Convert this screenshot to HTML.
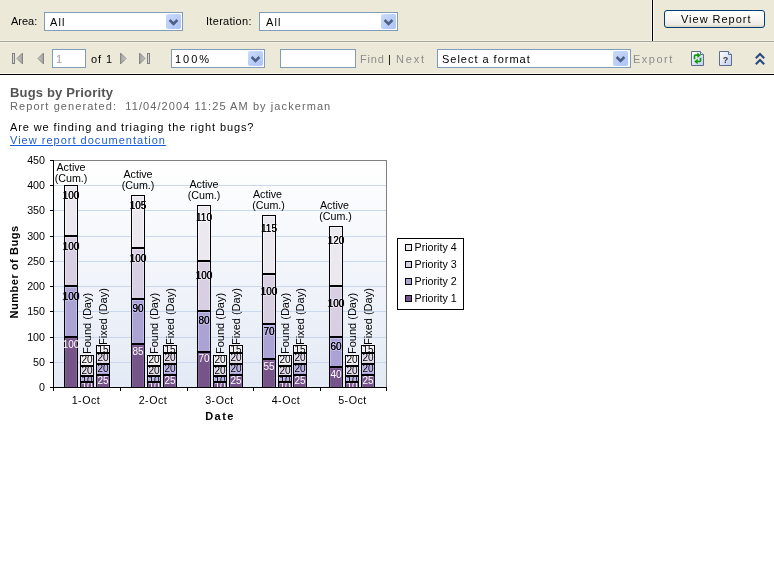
<!DOCTYPE html>
<html><head><meta charset="utf-8">
<style>
html,body{margin:0;padding:0;width:774px;height:587px;overflow:hidden;background:#fff;font-family:"Liberation Sans",sans-serif;}
.a{position:absolute;white-space:nowrap;}
.t11{font-size:11px;line-height:12px;}
#params{position:absolute;left:0;top:0;width:774px;height:41px;background:#ECE9D8;}
#sep1{position:absolute;left:0;top:40px;width:774px;height:1px;background:#F3F1E6;}
#sep2{position:absolute;left:0;top:41px;width:774px;height:1px;background:#A9A79A;}
#tb{position:absolute;left:0;top:42px;width:774px;height:32px;background:#ECE9D8;}
#tbl{position:absolute;left:0;top:42px;width:774px;height:1px;background:#F3F1E6;}
#tbb1{position:absolute;left:0;top:73px;width:774px;height:1px;background:#FAF8EC;}
#tbb2{position:absolute;left:0;top:74px;width:774px;height:1px;background:#000;}
.dd{position:absolute;box-sizing:border-box;border:1px solid #7F9DB9;background:#fff;}
.btn{position:absolute;width:15px;height:15px;border-radius:2px;background:linear-gradient(135deg,#CBDAFC 0%,#B7CCF7 60%,#ADC3F5 100%);}
.btn svg{position:absolute;left:0;top:0;}
svg text{font-family:"Liberation Sans",sans-serif;}
.a,svg{will-change:transform;}
.ax{font-size:10.7px;fill:#000;}
.lb{font-size:10.7px;fill:#000;}
.lbs{font-size:10px;fill:#000;}
.rl{font-size:11px;fill:#000;}
.hl{stroke-width:2px;paint-order:stroke;stroke-linejoin:round;}
.tt{font-size:11px;font-weight:bold;fill:#000;}
.lg{font-size:10.7px;fill:#000;}
</style></head><body>
<div id="params"></div>
<div id="sep1"></div><div id="sep2"></div>
<div id="tb"></div><div id="tbl"></div><div id="tbb1"></div><div id="tbb2"></div>
<div class="a" style="left:651px;top:0;width:1px;height:41px;background:#FAF8EC"></div>
<div class="a" style="left:652px;top:0;width:1px;height:41px;background:#000"></div>
<div class="a" style="left:653px;top:0;width:1px;height:41px;background:#FAF8EC"></div>

<div class="a t11 m" style="left:11px;top:15px;">Area:</div>
<div class="dd" style="left:44px;top:12px;width:139px;height:19px;"></div>
<div class="a t11 m" style="left:50px;top:16px;letter-spacing:1.1px;">All</div>
<div class="btn" style="left:166px;top:14px;"><svg width="15" height="15"><path d="M3.6 6 L7.5 9.9 L11.4 6" stroke="#4D6185" stroke-width="2.6" fill="none"/></svg></div>

<div class="a t11 m" style="letter-spacing:0.3px;left:206px;top:15px;">Iteration:</div>
<div class="dd" style="left:259px;top:12px;width:139px;height:19px;"></div>
<div class="a t11 m" style="left:266px;top:16px;letter-spacing:1.1px;">All</div>
<div class="btn" style="left:381px;top:14px;"><svg width="15" height="15"><path d="M3.6 6 L7.5 9.9 L11.4 6" stroke="#4D6185" stroke-width="2.6" fill="none"/></svg></div>

<div class="a" style="left:664px;top:10px;width:101px;height:18px;box-sizing:border-box;border:1px solid #003C74;border-radius:3px;background:linear-gradient(#FFFFFF 0%,#F7F6F2 50%,#ECEAE3 85%,#D8D2C2 100%);"></div>
<div class="a t11 m" style="letter-spacing:0.98px;left:681px;top:13px;">View Report</div>

<div class="dd" style="left:52px;top:49px;width:34px;height:19px;"></div>
<div class="a t11 m" style="left:56px;top:53px;color:#A0A0A0;">1</div>
<div class="a t11 m" style="letter-spacing:0.9px;left:91px;top:53px;">of 1</div>

<div class="dd" style="left:171px;top:49px;width:94px;height:19px;"></div>
<div class="a t11 m" style="letter-spacing:2.0px;left:175px;top:53px;">100%</div>
<div class="btn" style="left:248px;top:51px;"><svg width="15" height="15"><path d="M3.6 6 L7.5 9.9 L11.4 6" stroke="#4D6185" stroke-width="2.6" fill="none"/></svg></div>

<div class="dd" style="left:280px;top:49px;width:76px;height:19px;"></div>
<div class="a t11 m" style="letter-spacing:0.85px;left:359.5px;top:53px;color:#8C8C8C;">Find</div>
<div class="a t11 m" style="left:388px;top:53px;">|</div>
<div class="a t11 m" style="letter-spacing:1.85px;left:395.5px;top:53px;color:#8C8C8C;">Next</div>

<div class="dd" style="left:437px;top:49px;width:194px;height:19px;"></div>
<div class="a t11 m" style="letter-spacing:0.98px;left:442px;top:53px;">Select a format</div>
<div class="btn" style="left:613px;top:51px;"><svg width="15" height="15"><path d="M3.6 6 L7.5 9.9 L11.4 6" stroke="#4D6185" stroke-width="2.6" fill="none"/></svg></div>
<div class="a t11 m" style="letter-spacing:1.5px;left:633px;top:53px;color:#8C8C8C;">Export</div>

<div class="a t11 m" style="letter-spacing:0.17px;left:9.5px;top:86px;font-size:13px;line-height:14px;font-weight:bold;color:#555;">Bugs by Priority</div>
<div class="a t11 m" style="letter-spacing:1.08px;left:10px;top:100px;color:#666;">Report generated:&nbsp; 11/04/2004 11:25 AM by jackerman</div>
<div class="a t11 m" style="letter-spacing:0.89px;left:10px;top:121px;">Are we finding and triaging the right bugs?</div>
<div class="a t11 m" style="letter-spacing:1.01px;left:10px;top:134px;color:#1F5BD1;text-decoration:underline;">View report documentation</div>


<svg class="a" style="left:0;top:42px" width="774" height="32">
<defs>
<linearGradient id="gb" x1="0" y1="0" x2="1" y2="0"><stop offset="0" stop-color="#9A9A9A"/><stop offset="0.5" stop-color="#D8D8D8"/><stop offset="1" stop-color="#8A8A8A"/></linearGradient>
<linearGradient id="gt" x1="0" y1="0" x2="1" y2="0"><stop offset="0" stop-color="#D0D0D0"/><stop offset="1" stop-color="#9C9C9C"/></linearGradient>
<linearGradient id="gtr" x1="1" y1="0" x2="0" y2="0"><stop offset="0" stop-color="#D0D0D0"/><stop offset="1" stop-color="#9C9C9C"/></linearGradient>
<linearGradient id="doc" x1="0" y1="0" x2="1" y2="1"><stop offset="0" stop-color="#FFFFFF"/><stop offset="1" stop-color="#BFCDEE"/></linearGradient>
</defs>
<rect x="12.5" y="11.5" width="2" height="10" fill="url(#gb)" stroke="#7E7E7E" stroke-width="1"/>
<path d="M17 16.5 L22.5 11 L22.5 22 Z" fill="url(#gt)" stroke="#808080" stroke-width="0.9" stroke-linejoin="round"/>
<path d="M38 16.5 L43.5 11 L43.5 22 Z" fill="url(#gt)" stroke="#808080" stroke-width="0.9" stroke-linejoin="round"/>
<path d="M126 16.5 L120.5 11 L120.5 22 Z" fill="url(#gtr)" stroke="#808080" stroke-width="0.9" stroke-linejoin="round"/>
<path d="M145 16.5 L139.5 11 L139.5 22 Z" fill="url(#gtr)" stroke="#808080" stroke-width="0.9" stroke-linejoin="round"/>
<rect x="147.5" y="11.5" width="2" height="10" fill="url(#gb)" stroke="#7E7E7E" stroke-width="1"/>
<path d="M691.5 9.5 L700.5 9.5 L703.5 12.5 L703.5 23.5 L691.5 23.5 Z" fill="url(#doc)" stroke="#5C6F8E" stroke-width="1"/>
<path d="M700.5 9.5 L700.5 12.5 L703.5 12.5" fill="#E8EEF8" stroke="#5C6F8E" stroke-width="1"/>
<path d="M694.5 17.2 L694.5 14 Q694.5 13.2 695.5 13.2 L698 13.2" fill="none" stroke="#129A12" stroke-width="1.7"/>
<path d="M697.3 10.6 L700.9 13.3 L697.3 16 Z" fill="#129A12"/>
<path d="M700.5 15.8 L700.5 18.6 Q700.5 19.5 699.5 19.5 L697 19.5" fill="none" stroke="#129A12" stroke-width="1.7"/>
<path d="M697.7 16.8 L694.1 19.5 L697.7 22.2 Z" fill="#129A12"/>
<path d="M719.5 9.5 L728.5 9.5 L731.5 12.5 L731.5 23.5 L719.5 23.5 Z" fill="url(#doc)" stroke="#5C6F8E" stroke-width="1"/>
<path d="M728.5 9.5 L728.5 12.5 L731.5 12.5" fill="#E8EEF8" stroke="#5C6F8E" stroke-width="1"/>
<text x="725.5" y="21" text-anchor="middle" style="font-family:'Liberation Sans';font-size:9px;font-weight:bold;fill:#333">?</text>
<path d="M755.8 16.2 L760 12 L764.2 16.2" fill="none" stroke="#2A4A7E" stroke-width="2.1"/>
<path d="M755.8 22.2 L760 18 L764.2 22.2" fill="none" stroke="#2A4A7E" stroke-width="2.1"/>
</svg>
<svg class="a" style="left:0;top:0" width="774" height="587" shape-rendering="crispEdges">
<defs><linearGradient id="bg" x1="0" y1="0" x2="0" y2="1"><stop offset="0" stop-color="#FFFFFF"/><stop offset="1" stop-color="#E4EAF5"/></linearGradient><clipPath id="pc"><rect x="0" y="0" width="774" height="387"/></clipPath></defs>
<rect x="54" y="161" width="332" height="226" fill="url(#bg)" />
<rect x="54" y="362" width="332" height="1" fill="#C9D8EC" />
<rect x="54" y="337" width="332" height="1" fill="#C9D8EC" />
<rect x="54" y="311" width="332" height="1" fill="#C9D8EC" />
<rect x="54" y="286" width="332" height="1" fill="#C9D8EC" />
<rect x="54" y="261" width="332" height="1" fill="#C9D8EC" />
<rect x="54" y="236" width="332" height="1" fill="#C9D8EC" />
<rect x="54" y="210" width="332" height="1" fill="#C9D8EC" />
<rect x="54" y="185" width="332" height="1" fill="#C9D8EC" />
<rect x="53" y="160" width="334" height="1" fill="#808080" />
<rect x="386" y="160" width="1" height="227" fill="#808080" />
<rect x="53" y="160" width="1" height="228" fill="#000" />
<rect x="53" y="387" width="334" height="1" fill="#000" />
<rect x="50" y="387" width="3" height="1" fill="#000" />
<text x="45" y="391" text-anchor="end" class="ax">0</text>
<rect x="50" y="362" width="3" height="1" fill="#000" />
<text x="45" y="366" text-anchor="end" class="ax">50</text>
<rect x="50" y="337" width="3" height="1" fill="#000" />
<text x="45" y="341" text-anchor="end" class="ax">100</text>
<rect x="50" y="311" width="3" height="1" fill="#000" />
<text x="45" y="315" text-anchor="end" class="ax">150</text>
<rect x="50" y="286" width="3" height="1" fill="#000" />
<text x="45" y="290" text-anchor="end" class="ax">200</text>
<rect x="50" y="261" width="3" height="1" fill="#000" />
<text x="45" y="265" text-anchor="end" class="ax">250</text>
<rect x="50" y="236" width="3" height="1" fill="#000" />
<text x="45" y="240" text-anchor="end" class="ax">300</text>
<rect x="50" y="210" width="3" height="1" fill="#000" />
<text x="45" y="214" text-anchor="end" class="ax">350</text>
<rect x="50" y="185" width="3" height="1" fill="#000" />
<text x="45" y="189" text-anchor="end" class="ax">400</text>
<rect x="50" y="160" width="3" height="1" fill="#000" />
<text x="45" y="164" text-anchor="end" class="ax">450</text>
<rect x="53" y="387" width="1" height="4" fill="#000" />
<rect x="120" y="387" width="1" height="4" fill="#000" />
<rect x="187" y="387" width="1" height="4" fill="#000" />
<rect x="253" y="387" width="1" height="4" fill="#000" />
<rect x="320" y="387" width="1" height="4" fill="#000" />
<rect x="386" y="387" width="1" height="4" fill="#000" />
<rect x="65" y="186" width="12" height="49" fill="#F6F4F8" />
<rect x="66" y="187" width="10" height="48" fill="#ECE8F0" />
<text x="71" y="199" text-anchor="middle" style="fill:#000;stroke:#F6F4F8" class="lbs hl">100</text>
<rect x="65" y="237" width="12" height="48" fill="#E6E0EE" />
<rect x="66" y="238" width="10" height="47" fill="#D8CFE3" />
<text x="71" y="250" text-anchor="middle" style="fill:#000;stroke:#E6E0EE" class="lbs hl">100</text>
<rect x="65" y="287" width="12" height="49" fill="#C2BCEA" />
<rect x="66" y="288" width="10" height="48" fill="#ABA3D3" />
<text x="71" y="300" text-anchor="middle" style="fill:#000;stroke:#C2BCEA" class="lbs hl">100</text>
<rect x="65" y="338" width="12" height="49" fill="#84649A" />
<rect x="66" y="339" width="10" height="48" fill="#76548A" />
<rect x="64" y="185" width="14" height="1" fill="#000" />
<rect x="64" y="235" width="14" height="1" fill="#000" />
<rect x="64" y="236" width="14" height="1" fill="#000" />
<rect x="64" y="285" width="14" height="1" fill="#000" />
<rect x="64" y="286" width="14" height="1" fill="#000" />
<rect x="64" y="336" width="14" height="1" fill="#000" />
<rect x="64" y="337" width="14" height="1" fill="#000" />
<rect x="64" y="185" width="1" height="202" fill="#000" />
<rect x="77" y="185" width="1" height="202" fill="#000" />
<text x="71" y="199" text-anchor="middle" style="fill:#000" class="lbs">100</text>
<text x="71" y="250" text-anchor="middle" style="fill:#000" class="lbs">100</text>
<text x="71" y="300" text-anchor="middle" style="fill:#000" class="lbs">100</text>
<text x="71" y="348" text-anchor="middle" style="fill:#fff" class="lbs">100</text>
<g clip-path="url(#pc)">
<rect x="81" y="356" width="12" height="9" fill="#F6F4F8" />
<rect x="82" y="357" width="10" height="8" fill="#ECE8F0" />
<text x="87" y="363" text-anchor="middle" style="fill:#000;stroke:#F6F4F8" class="lbs hl">20</text>
<rect x="81" y="367" width="12" height="8" fill="#E6E0EE" />
<rect x="82" y="368" width="10" height="7" fill="#D8CFE3" />
<text x="87" y="374" text-anchor="middle" style="fill:#000;stroke:#E6E0EE" class="lbs hl">20</text>
<rect x="81" y="377" width="12" height="4" fill="#C2BCEA" />
<rect x="82" y="378" width="10" height="3" fill="#ABA3D3" />
<text x="87" y="384" text-anchor="middle" style="fill:#000;stroke:#C2BCEA" class="lbs hl">10</text>
<rect x="81" y="383" width="12" height="4" fill="#84649A" />
<rect x="82" y="384" width="10" height="3" fill="#76548A" />
<text x="87" y="390" text-anchor="middle" style="fill:#fff;stroke:none" class="lbs">10</text>
<rect x="80" y="355" width="14" height="1" fill="#000" />
<rect x="80" y="365" width="14" height="1" fill="#000" />
<rect x="80" y="366" width="14" height="1" fill="#000" />
<rect x="80" y="375" width="14" height="1" fill="#000" />
<rect x="80" y="376" width="14" height="1" fill="#000" />
<rect x="80" y="381" width="14" height="1" fill="#000" />
<rect x="80" y="382" width="14" height="1" fill="#000" />
<rect x="80" y="355" width="1" height="32" fill="#000" />
<rect x="93" y="355" width="1" height="32" fill="#000" />
<rect x="97" y="346" width="12" height="6" fill="#F6F4F8" />
<rect x="98" y="347" width="10" height="5" fill="#ECE8F0" />
<text x="103" y="353" text-anchor="middle" style="fill:#000;stroke:#F6F4F8" class="lbs hl">15</text>
<rect x="97" y="354" width="12" height="9" fill="#E6E0EE" />
<rect x="98" y="355" width="10" height="8" fill="#D8CFE3" />
<text x="103" y="361" text-anchor="middle" style="fill:#000;stroke:#E6E0EE" class="lbs hl">20</text>
<rect x="97" y="365" width="12" height="9" fill="#C2BCEA" />
<rect x="98" y="366" width="10" height="8" fill="#ABA3D3" />
<text x="103" y="372" text-anchor="middle" style="fill:#000;stroke:#C2BCEA" class="lbs hl">20</text>
<rect x="97" y="376" width="12" height="11" fill="#84649A" />
<rect x="98" y="377" width="10" height="10" fill="#76548A" />
<text x="103" y="384" text-anchor="middle" style="fill:#fff;stroke:none" class="lbs">25</text>
<rect x="96" y="345" width="14" height="1" fill="#000" />
<rect x="96" y="352" width="14" height="1" fill="#000" />
<rect x="96" y="353" width="14" height="1" fill="#000" />
<rect x="96" y="363" width="14" height="1" fill="#000" />
<rect x="96" y="364" width="14" height="1" fill="#000" />
<rect x="96" y="374" width="14" height="1" fill="#000" />
<rect x="96" y="375" width="14" height="1" fill="#000" />
<rect x="96" y="345" width="1" height="42" fill="#000" />
<rect x="109" y="345" width="1" height="42" fill="#000" />
</g>
<rect x="132" y="196" width="12" height="51" fill="#F6F4F8" />
<rect x="133" y="197" width="10" height="50" fill="#ECE8F0" />
<text x="138" y="209" text-anchor="middle" style="fill:#000;stroke:#F6F4F8" class="lbs hl">105</text>
<rect x="132" y="249" width="12" height="49" fill="#E6E0EE" />
<rect x="133" y="250" width="10" height="48" fill="#D8CFE3" />
<text x="138" y="262" text-anchor="middle" style="fill:#000;stroke:#E6E0EE" class="lbs hl">100</text>
<rect x="132" y="300" width="12" height="43" fill="#C2BCEA" />
<rect x="133" y="301" width="10" height="42" fill="#ABA3D3" />
<text x="138" y="312" text-anchor="middle" style="fill:#000;stroke:#C2BCEA" class="lbs hl">90</text>
<rect x="132" y="345" width="12" height="42" fill="#84649A" />
<rect x="133" y="346" width="10" height="41" fill="#76548A" />
<rect x="131" y="195" width="14" height="1" fill="#000" />
<rect x="131" y="247" width="14" height="1" fill="#000" />
<rect x="131" y="248" width="14" height="1" fill="#000" />
<rect x="131" y="298" width="14" height="1" fill="#000" />
<rect x="131" y="299" width="14" height="1" fill="#000" />
<rect x="131" y="343" width="14" height="1" fill="#000" />
<rect x="131" y="344" width="14" height="1" fill="#000" />
<rect x="131" y="195" width="1" height="192" fill="#000" />
<rect x="144" y="195" width="1" height="192" fill="#000" />
<text x="138" y="209" text-anchor="middle" style="fill:#000" class="lbs">105</text>
<text x="138" y="262" text-anchor="middle" style="fill:#000" class="lbs">100</text>
<text x="138" y="312" text-anchor="middle" style="fill:#000" class="lbs">90</text>
<text x="138" y="355" text-anchor="middle" style="fill:#fff" class="lbs">85</text>
<g clip-path="url(#pc)">
<rect x="148" y="356" width="12" height="9" fill="#F6F4F8" />
<rect x="149" y="357" width="10" height="8" fill="#ECE8F0" />
<text x="154" y="363" text-anchor="middle" style="fill:#000;stroke:#F6F4F8" class="lbs hl">20</text>
<rect x="148" y="367" width="12" height="8" fill="#E6E0EE" />
<rect x="149" y="368" width="10" height="7" fill="#D8CFE3" />
<text x="154" y="374" text-anchor="middle" style="fill:#000;stroke:#E6E0EE" class="lbs hl">20</text>
<rect x="148" y="377" width="12" height="4" fill="#C2BCEA" />
<rect x="149" y="378" width="10" height="3" fill="#ABA3D3" />
<text x="154" y="384" text-anchor="middle" style="fill:#000;stroke:#C2BCEA" class="lbs hl">10</text>
<rect x="148" y="383" width="12" height="4" fill="#84649A" />
<rect x="149" y="384" width="10" height="3" fill="#76548A" />
<text x="154" y="390" text-anchor="middle" style="fill:#fff;stroke:none" class="lbs">10</text>
<rect x="147" y="355" width="14" height="1" fill="#000" />
<rect x="147" y="365" width="14" height="1" fill="#000" />
<rect x="147" y="366" width="14" height="1" fill="#000" />
<rect x="147" y="375" width="14" height="1" fill="#000" />
<rect x="147" y="376" width="14" height="1" fill="#000" />
<rect x="147" y="381" width="14" height="1" fill="#000" />
<rect x="147" y="382" width="14" height="1" fill="#000" />
<rect x="147" y="355" width="1" height="32" fill="#000" />
<rect x="160" y="355" width="1" height="32" fill="#000" />
<rect x="164" y="346" width="12" height="6" fill="#F6F4F8" />
<rect x="165" y="347" width="10" height="5" fill="#ECE8F0" />
<text x="170" y="353" text-anchor="middle" style="fill:#000;stroke:#F6F4F8" class="lbs hl">15</text>
<rect x="164" y="354" width="12" height="9" fill="#E6E0EE" />
<rect x="165" y="355" width="10" height="8" fill="#D8CFE3" />
<text x="170" y="361" text-anchor="middle" style="fill:#000;stroke:#E6E0EE" class="lbs hl">20</text>
<rect x="164" y="365" width="12" height="9" fill="#C2BCEA" />
<rect x="165" y="366" width="10" height="8" fill="#ABA3D3" />
<text x="170" y="372" text-anchor="middle" style="fill:#000;stroke:#C2BCEA" class="lbs hl">20</text>
<rect x="164" y="376" width="12" height="11" fill="#84649A" />
<rect x="165" y="377" width="10" height="10" fill="#76548A" />
<text x="170" y="384" text-anchor="middle" style="fill:#fff;stroke:none" class="lbs">25</text>
<rect x="163" y="345" width="14" height="1" fill="#000" />
<rect x="163" y="352" width="14" height="1" fill="#000" />
<rect x="163" y="353" width="14" height="1" fill="#000" />
<rect x="163" y="363" width="14" height="1" fill="#000" />
<rect x="163" y="364" width="14" height="1" fill="#000" />
<rect x="163" y="374" width="14" height="1" fill="#000" />
<rect x="163" y="375" width="14" height="1" fill="#000" />
<rect x="163" y="345" width="1" height="42" fill="#000" />
<rect x="176" y="345" width="1" height="42" fill="#000" />
</g>
<rect x="198" y="206" width="12" height="54" fill="#F6F4F8" />
<rect x="199" y="207" width="10" height="53" fill="#ECE8F0" />
<text x="204" y="221" text-anchor="middle" style="fill:#000;stroke:#F6F4F8" class="lbs hl">110</text>
<rect x="198" y="262" width="12" height="48" fill="#E6E0EE" />
<rect x="199" y="263" width="10" height="47" fill="#D8CFE3" />
<text x="204" y="279" text-anchor="middle" style="fill:#000;stroke:#E6E0EE" class="lbs hl">100</text>
<rect x="198" y="312" width="12" height="39" fill="#C2BCEA" />
<rect x="199" y="313" width="10" height="38" fill="#ABA3D3" />
<text x="204" y="324" text-anchor="middle" style="fill:#000;stroke:#C2BCEA" class="lbs hl">80</text>
<rect x="198" y="353" width="12" height="34" fill="#84649A" />
<rect x="199" y="354" width="10" height="33" fill="#76548A" />
<rect x="197" y="205" width="14" height="1" fill="#000" />
<rect x="197" y="260" width="14" height="1" fill="#000" />
<rect x="197" y="261" width="14" height="1" fill="#000" />
<rect x="197" y="310" width="14" height="1" fill="#000" />
<rect x="197" y="311" width="14" height="1" fill="#000" />
<rect x="197" y="351" width="14" height="1" fill="#000" />
<rect x="197" y="352" width="14" height="1" fill="#000" />
<rect x="197" y="205" width="1" height="182" fill="#000" />
<rect x="210" y="205" width="1" height="182" fill="#000" />
<text x="204" y="221" text-anchor="middle" style="fill:#000" class="lbs">110</text>
<text x="204" y="279" text-anchor="middle" style="fill:#000" class="lbs">100</text>
<text x="204" y="324" text-anchor="middle" style="fill:#000" class="lbs">80</text>
<text x="204" y="362" text-anchor="middle" style="fill:#fff" class="lbs">70</text>
<g clip-path="url(#pc)">
<rect x="214" y="356" width="12" height="9" fill="#F6F4F8" />
<rect x="215" y="357" width="10" height="8" fill="#ECE8F0" />
<text x="220" y="363" text-anchor="middle" style="fill:#000;stroke:#F6F4F8" class="lbs hl">20</text>
<rect x="214" y="367" width="12" height="8" fill="#E6E0EE" />
<rect x="215" y="368" width="10" height="7" fill="#D8CFE3" />
<text x="220" y="374" text-anchor="middle" style="fill:#000;stroke:#E6E0EE" class="lbs hl">20</text>
<rect x="214" y="377" width="12" height="4" fill="#C2BCEA" />
<rect x="215" y="378" width="10" height="3" fill="#ABA3D3" />
<text x="220" y="384" text-anchor="middle" style="fill:#000;stroke:#C2BCEA" class="lbs hl">10</text>
<rect x="214" y="383" width="12" height="4" fill="#84649A" />
<rect x="215" y="384" width="10" height="3" fill="#76548A" />
<text x="220" y="390" text-anchor="middle" style="fill:#fff;stroke:none" class="lbs">10</text>
<rect x="213" y="355" width="14" height="1" fill="#000" />
<rect x="213" y="365" width="14" height="1" fill="#000" />
<rect x="213" y="366" width="14" height="1" fill="#000" />
<rect x="213" y="375" width="14" height="1" fill="#000" />
<rect x="213" y="376" width="14" height="1" fill="#000" />
<rect x="213" y="381" width="14" height="1" fill="#000" />
<rect x="213" y="382" width="14" height="1" fill="#000" />
<rect x="213" y="355" width="1" height="32" fill="#000" />
<rect x="226" y="355" width="1" height="32" fill="#000" />
<rect x="230" y="346" width="12" height="6" fill="#F6F4F8" />
<rect x="231" y="347" width="10" height="5" fill="#ECE8F0" />
<text x="236" y="353" text-anchor="middle" style="fill:#000;stroke:#F6F4F8" class="lbs hl">15</text>
<rect x="230" y="354" width="12" height="9" fill="#E6E0EE" />
<rect x="231" y="355" width="10" height="8" fill="#D8CFE3" />
<text x="236" y="361" text-anchor="middle" style="fill:#000;stroke:#E6E0EE" class="lbs hl">20</text>
<rect x="230" y="365" width="12" height="9" fill="#C2BCEA" />
<rect x="231" y="366" width="10" height="8" fill="#ABA3D3" />
<text x="236" y="372" text-anchor="middle" style="fill:#000;stroke:#C2BCEA" class="lbs hl">20</text>
<rect x="230" y="376" width="12" height="11" fill="#84649A" />
<rect x="231" y="377" width="10" height="10" fill="#76548A" />
<text x="236" y="384" text-anchor="middle" style="fill:#fff;stroke:none" class="lbs">25</text>
<rect x="229" y="345" width="14" height="1" fill="#000" />
<rect x="229" y="352" width="14" height="1" fill="#000" />
<rect x="229" y="353" width="14" height="1" fill="#000" />
<rect x="229" y="363" width="14" height="1" fill="#000" />
<rect x="229" y="364" width="14" height="1" fill="#000" />
<rect x="229" y="374" width="14" height="1" fill="#000" />
<rect x="229" y="375" width="14" height="1" fill="#000" />
<rect x="229" y="345" width="1" height="42" fill="#000" />
<rect x="242" y="345" width="1" height="42" fill="#000" />
</g>
<rect x="263" y="216" width="12" height="57" fill="#F6F4F8" />
<rect x="264" y="217" width="10" height="56" fill="#ECE8F0" />
<text x="269" y="232" text-anchor="middle" style="fill:#000;stroke:#F6F4F8" class="lbs hl">115</text>
<rect x="263" y="275" width="12" height="48" fill="#E6E0EE" />
<rect x="264" y="276" width="10" height="47" fill="#D8CFE3" />
<text x="269" y="295" text-anchor="middle" style="fill:#000;stroke:#E6E0EE" class="lbs hl">100</text>
<rect x="263" y="325" width="12" height="33" fill="#C2BCEA" />
<rect x="264" y="326" width="10" height="32" fill="#ABA3D3" />
<text x="269" y="335" text-anchor="middle" style="fill:#000;stroke:#C2BCEA" class="lbs hl">70</text>
<rect x="263" y="360" width="12" height="27" fill="#84649A" />
<rect x="264" y="361" width="10" height="26" fill="#76548A" />
<rect x="262" y="215" width="14" height="1" fill="#000" />
<rect x="262" y="273" width="14" height="1" fill="#000" />
<rect x="262" y="274" width="14" height="1" fill="#000" />
<rect x="262" y="323" width="14" height="1" fill="#000" />
<rect x="262" y="324" width="14" height="1" fill="#000" />
<rect x="262" y="358" width="14" height="1" fill="#000" />
<rect x="262" y="359" width="14" height="1" fill="#000" />
<rect x="262" y="215" width="1" height="172" fill="#000" />
<rect x="275" y="215" width="1" height="172" fill="#000" />
<text x="269" y="232" text-anchor="middle" style="fill:#000" class="lbs">115</text>
<text x="269" y="295" text-anchor="middle" style="fill:#000" class="lbs">100</text>
<text x="269" y="335" text-anchor="middle" style="fill:#000" class="lbs">70</text>
<text x="269" y="370" text-anchor="middle" style="fill:#fff" class="lbs">55</text>
<g clip-path="url(#pc)">
<rect x="279" y="356" width="12" height="9" fill="#F6F4F8" />
<rect x="280" y="357" width="10" height="8" fill="#ECE8F0" />
<text x="285" y="363" text-anchor="middle" style="fill:#000;stroke:#F6F4F8" class="lbs hl">20</text>
<rect x="279" y="367" width="12" height="8" fill="#E6E0EE" />
<rect x="280" y="368" width="10" height="7" fill="#D8CFE3" />
<text x="285" y="374" text-anchor="middle" style="fill:#000;stroke:#E6E0EE" class="lbs hl">20</text>
<rect x="279" y="377" width="12" height="4" fill="#C2BCEA" />
<rect x="280" y="378" width="10" height="3" fill="#ABA3D3" />
<text x="285" y="384" text-anchor="middle" style="fill:#000;stroke:#C2BCEA" class="lbs hl">10</text>
<rect x="279" y="383" width="12" height="4" fill="#84649A" />
<rect x="280" y="384" width="10" height="3" fill="#76548A" />
<text x="285" y="390" text-anchor="middle" style="fill:#fff;stroke:none" class="lbs">10</text>
<rect x="278" y="355" width="14" height="1" fill="#000" />
<rect x="278" y="365" width="14" height="1" fill="#000" />
<rect x="278" y="366" width="14" height="1" fill="#000" />
<rect x="278" y="375" width="14" height="1" fill="#000" />
<rect x="278" y="376" width="14" height="1" fill="#000" />
<rect x="278" y="381" width="14" height="1" fill="#000" />
<rect x="278" y="382" width="14" height="1" fill="#000" />
<rect x="278" y="355" width="1" height="32" fill="#000" />
<rect x="291" y="355" width="1" height="32" fill="#000" />
<rect x="294" y="346" width="12" height="6" fill="#F6F4F8" />
<rect x="295" y="347" width="10" height="5" fill="#ECE8F0" />
<text x="300" y="353" text-anchor="middle" style="fill:#000;stroke:#F6F4F8" class="lbs hl">15</text>
<rect x="294" y="354" width="12" height="9" fill="#E6E0EE" />
<rect x="295" y="355" width="10" height="8" fill="#D8CFE3" />
<text x="300" y="361" text-anchor="middle" style="fill:#000;stroke:#E6E0EE" class="lbs hl">20</text>
<rect x="294" y="365" width="12" height="9" fill="#C2BCEA" />
<rect x="295" y="366" width="10" height="8" fill="#ABA3D3" />
<text x="300" y="372" text-anchor="middle" style="fill:#000;stroke:#C2BCEA" class="lbs hl">20</text>
<rect x="294" y="376" width="12" height="11" fill="#84649A" />
<rect x="295" y="377" width="10" height="10" fill="#76548A" />
<text x="300" y="384" text-anchor="middle" style="fill:#fff;stroke:none" class="lbs">25</text>
<rect x="293" y="345" width="14" height="1" fill="#000" />
<rect x="293" y="352" width="14" height="1" fill="#000" />
<rect x="293" y="353" width="14" height="1" fill="#000" />
<rect x="293" y="363" width="14" height="1" fill="#000" />
<rect x="293" y="364" width="14" height="1" fill="#000" />
<rect x="293" y="374" width="14" height="1" fill="#000" />
<rect x="293" y="375" width="14" height="1" fill="#000" />
<rect x="293" y="345" width="1" height="42" fill="#000" />
<rect x="306" y="345" width="1" height="42" fill="#000" />
</g>
<rect x="330" y="227" width="12" height="58" fill="#F6F4F8" />
<rect x="331" y="228" width="10" height="57" fill="#ECE8F0" />
<text x="336" y="244" text-anchor="middle" style="fill:#000;stroke:#F6F4F8" class="lbs hl">120</text>
<rect x="330" y="287" width="12" height="49" fill="#E6E0EE" />
<rect x="331" y="288" width="10" height="48" fill="#D8CFE3" />
<text x="336" y="307" text-anchor="middle" style="fill:#000;stroke:#E6E0EE" class="lbs hl">100</text>
<rect x="330" y="338" width="12" height="28" fill="#C2BCEA" />
<rect x="331" y="339" width="10" height="27" fill="#ABA3D3" />
<text x="336" y="350" text-anchor="middle" style="fill:#000;stroke:#C2BCEA" class="lbs hl">60</text>
<rect x="330" y="368" width="12" height="19" fill="#84649A" />
<rect x="331" y="369" width="10" height="18" fill="#76548A" />
<rect x="329" y="226" width="14" height="1" fill="#000" />
<rect x="329" y="285" width="14" height="1" fill="#000" />
<rect x="329" y="286" width="14" height="1" fill="#000" />
<rect x="329" y="336" width="14" height="1" fill="#000" />
<rect x="329" y="337" width="14" height="1" fill="#000" />
<rect x="329" y="366" width="14" height="1" fill="#000" />
<rect x="329" y="367" width="14" height="1" fill="#000" />
<rect x="329" y="226" width="1" height="161" fill="#000" />
<rect x="342" y="226" width="1" height="161" fill="#000" />
<text x="336" y="244" text-anchor="middle" style="fill:#000" class="lbs">120</text>
<text x="336" y="307" text-anchor="middle" style="fill:#000" class="lbs">100</text>
<text x="336" y="350" text-anchor="middle" style="fill:#000" class="lbs">60</text>
<text x="336" y="378" text-anchor="middle" style="fill:#fff" class="lbs">40</text>
<g clip-path="url(#pc)">
<rect x="346" y="356" width="12" height="9" fill="#F6F4F8" />
<rect x="347" y="357" width="10" height="8" fill="#ECE8F0" />
<text x="352" y="363" text-anchor="middle" style="fill:#000;stroke:#F6F4F8" class="lbs hl">20</text>
<rect x="346" y="367" width="12" height="8" fill="#E6E0EE" />
<rect x="347" y="368" width="10" height="7" fill="#D8CFE3" />
<text x="352" y="374" text-anchor="middle" style="fill:#000;stroke:#E6E0EE" class="lbs hl">20</text>
<rect x="346" y="377" width="12" height="4" fill="#C2BCEA" />
<rect x="347" y="378" width="10" height="3" fill="#ABA3D3" />
<text x="352" y="384" text-anchor="middle" style="fill:#000;stroke:#C2BCEA" class="lbs hl">10</text>
<rect x="346" y="383" width="12" height="4" fill="#84649A" />
<rect x="347" y="384" width="10" height="3" fill="#76548A" />
<text x="352" y="390" text-anchor="middle" style="fill:#fff;stroke:none" class="lbs">10</text>
<rect x="345" y="355" width="14" height="1" fill="#000" />
<rect x="345" y="365" width="14" height="1" fill="#000" />
<rect x="345" y="366" width="14" height="1" fill="#000" />
<rect x="345" y="375" width="14" height="1" fill="#000" />
<rect x="345" y="376" width="14" height="1" fill="#000" />
<rect x="345" y="381" width="14" height="1" fill="#000" />
<rect x="345" y="382" width="14" height="1" fill="#000" />
<rect x="345" y="355" width="1" height="32" fill="#000" />
<rect x="358" y="355" width="1" height="32" fill="#000" />
<rect x="362" y="346" width="12" height="6" fill="#F6F4F8" />
<rect x="363" y="347" width="10" height="5" fill="#ECE8F0" />
<text x="368" y="353" text-anchor="middle" style="fill:#000;stroke:#F6F4F8" class="lbs hl">15</text>
<rect x="362" y="354" width="12" height="9" fill="#E6E0EE" />
<rect x="363" y="355" width="10" height="8" fill="#D8CFE3" />
<text x="368" y="361" text-anchor="middle" style="fill:#000;stroke:#E6E0EE" class="lbs hl">20</text>
<rect x="362" y="365" width="12" height="9" fill="#C2BCEA" />
<rect x="363" y="366" width="10" height="8" fill="#ABA3D3" />
<text x="368" y="372" text-anchor="middle" style="fill:#000;stroke:#C2BCEA" class="lbs hl">20</text>
<rect x="362" y="376" width="12" height="11" fill="#84649A" />
<rect x="363" y="377" width="10" height="10" fill="#76548A" />
<text x="368" y="384" text-anchor="middle" style="fill:#fff;stroke:none" class="lbs">25</text>
<rect x="361" y="345" width="14" height="1" fill="#000" />
<rect x="361" y="352" width="14" height="1" fill="#000" />
<rect x="361" y="353" width="14" height="1" fill="#000" />
<rect x="361" y="363" width="14" height="1" fill="#000" />
<rect x="361" y="364" width="14" height="1" fill="#000" />
<rect x="361" y="374" width="14" height="1" fill="#000" />
<rect x="361" y="375" width="14" height="1" fill="#000" />
<rect x="361" y="345" width="1" height="42" fill="#000" />
<rect x="374" y="345" width="1" height="42" fill="#000" />
</g>
<text x="71" y="170.5" text-anchor="middle" class="lb">Active</text>
<text x="71" y="181.5" text-anchor="middle" class="lb">(Cum.)</text>
<text transform="translate(91,354) rotate(-90)" class="rl">Found (Day)</text>
<text transform="translate(107,345) rotate(-90)" class="rl">Fixed (Day)</text>
<text x="86.0" y="404" text-anchor="middle" class="ax" style="letter-spacing:0.5px">1-Oct</text>
<text x="138" y="178" text-anchor="middle" class="lb">Active</text>
<text x="138" y="189" text-anchor="middle" class="lb">(Cum.)</text>
<text transform="translate(158,354) rotate(-90)" class="rl">Found (Day)</text>
<text transform="translate(174,345) rotate(-90)" class="rl">Fixed (Day)</text>
<text x="153.0" y="404" text-anchor="middle" class="ax" style="letter-spacing:0.5px">2-Oct</text>
<text x="204" y="188" text-anchor="middle" class="lb">Active</text>
<text x="204" y="199" text-anchor="middle" class="lb">(Cum.)</text>
<text transform="translate(224,354) rotate(-90)" class="rl">Found (Day)</text>
<text transform="translate(240,345) rotate(-90)" class="rl">Fixed (Day)</text>
<text x="219.5" y="404" text-anchor="middle" class="ax" style="letter-spacing:0.5px">3-Oct</text>
<text x="267.5" y="198" text-anchor="middle" class="lb">Active</text>
<text x="268.5" y="209" text-anchor="middle" class="lb">(Cum.)</text>
<text transform="translate(289,354) rotate(-90)" class="rl">Found (Day)</text>
<text transform="translate(304,345) rotate(-90)" class="rl">Fixed (Day)</text>
<text x="286.0" y="404" text-anchor="middle" class="ax" style="letter-spacing:0.5px">4-Oct</text>
<text x="334.5" y="209" text-anchor="middle" class="lb">Active</text>
<text x="335.5" y="220" text-anchor="middle" class="lb">(Cum.)</text>
<text transform="translate(356,354) rotate(-90)" class="rl">Found (Day)</text>
<text transform="translate(372,345) rotate(-90)" class="rl">Fixed (Day)</text>
<text x="352.5" y="404" text-anchor="middle" class="ax" style="letter-spacing:0.5px">5-Oct</text>
<text x="220" y="420" text-anchor="middle" class="tt" style="letter-spacing:1.45px">Date</text>
<text transform="translate(18,272) rotate(-90)" text-anchor="middle" class="tt" style="letter-spacing:0.54px">Number of Bugs</text>
<rect x="397" y="238" width="67" height="72" fill="#000" />
<rect x="398" y="239" width="65" height="70" fill="#fff" />
<rect x="405" y="244" width="7" height="7" fill="#000" />
<rect x="406" y="245" width="5" height="5" fill="#ECE8F0" />
<text x="414.5" y="251" class="lg">Priority 4</text>
<rect x="405" y="261" width="7" height="7" fill="#000" />
<rect x="406" y="262" width="5" height="5" fill="#D8CFE3" />
<text x="414.5" y="268" class="lg">Priority 3</text>
<rect x="405" y="278" width="7" height="7" fill="#000" />
<rect x="406" y="279" width="5" height="5" fill="#ABA3D3" />
<text x="414.5" y="285" class="lg">Priority 2</text>
<rect x="405" y="295" width="7" height="7" fill="#000" />
<rect x="406" y="296" width="5" height="5" fill="#76548A" />
<text x="414.5" y="302" class="lg">Priority 1</text>
</svg>
</body></html>
